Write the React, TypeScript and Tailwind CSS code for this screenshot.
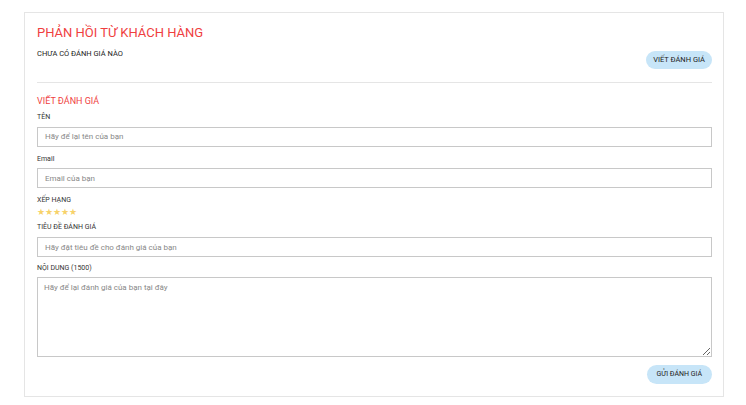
export default function App() {
  const field =
    'w-full h-[20px] border border-[#c8c8c8] px-[7px] text-[8px] text-[#555] placeholder:text-[#888] outline-none';
  const label = 'block text-[7px] leading-[10px] text-[#333]';

  return (
    <div className="bg-white min-h-[405px] pt-3 font-['Roboto',sans-serif]">
      <div className="ml-6 mr-[22px] h-[385px] border border-[#e5e5e5] pl-[12px] pr-[11px] pt-[12px]">
        <h2 className="text-[13px] leading-[16px] text-[#ef3f3f] uppercase">Phản hồi từ khách hàng</h2>

        <div className="flex items-start justify-between mt-[8px]">
          <p className="text-[7.5px] leading-[10px] text-[#222]">CHƯA CÓ ĐÁNH GIÁ NÀO</p>
          <button className="mt-[2px] h-[18px] px-[7px] rounded-full bg-[#c7e5f8] text-[7.5px] text-[#222]">
            VIẾT ĐÁNH GIÁ
          </button>
        </div>

        <div className="mt-[13px] border-t border-[#e5e5e5]" />

        <form className="pt-[12px]">
          <h3 className="text-[9px] leading-[12px] text-[#ef3f3f]">VIẾT ĐÁNH GIÁ</h3>

          <label className={`${label} mt-[5px]`}>TÊN</label>
          <input className={`${field} mt-[4px]`} placeholder="Hãy để lại tên của bạn" />

          <label className={`${label} mt-[7px]`}>Email</label>
          <input className={`${field} mt-[4px]`} placeholder="Email của bạn" />

          <label className={`${label} mt-[7px]`}>XẾP HẠNG</label>
          <div className="flex mt-[2px] text-[9px] leading-[10px] text-[#f7d26a]">
            <span>★</span>
            <span>★</span>
            <span>★</span>
            <span>★</span>
            <span>★</span>
          </div>

          <label className={`${label} mt-[5px]`}>TIÊU ĐỀ ĐÁNH GIÁ</label>
          <input className={`${field} mt-[5px]`} placeholder="Hãy đặt tiêu đề cho đánh giá của bạn" />

          <label className={`${label} mt-[6px]`}>NỘI DUNG (1500)</label>
          <textarea
            className="block w-full h-[80px] mt-[4px] border border-[#c8c8c8] px-[6px] py-[4px] text-[8px] text-[#555] placeholder:text-[#888] outline-none"
            placeholder="Hãy để lại đánh giá của bạn tại đây"
          />

          <div className="flex justify-end mt-[8px]">
            <button type="button" className="h-[19px] px-[10px] rounded-full bg-[#c7e5f8] text-[7px] text-[#222]">
              GỬI ĐÁNH GIÁ
            </button>
          </div>
        </form>
      </div>
    </div>
  );
}
